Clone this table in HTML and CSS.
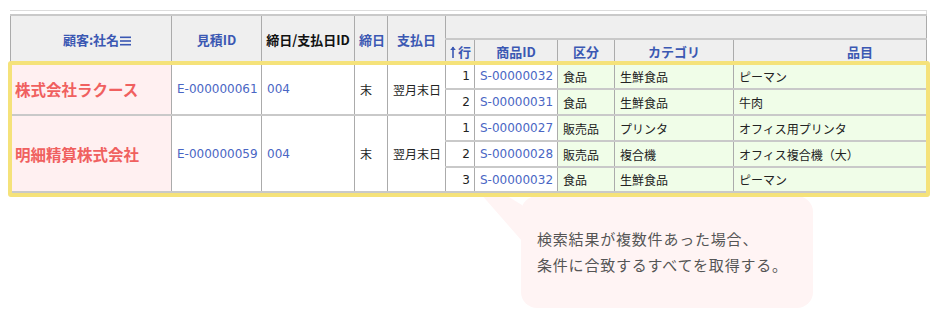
FILE: index.html
```html
<!DOCTYPE html>
<html lang="ja">
<head>
<meta charset="utf-8">
<link rel="stylesheet" href="styles.css">
</head>
<body>
<div class="page">
  <div class="board">
    <div class="grid-wrap">
      <table class="grid">
        <colgroup>
          <col class="c-name"><col class="c-est"><col class="c-pay"><col class="c-cut"><col class="c-day">
          <col class="c-no"><col class="c-pid"><col class="c-kbn"><col class="c-cat"><col class="c-item">
        </colgroup>
        <thead>
          <tr class="h1">
            <th rowspan="2" class="name-h">顧客:社名<svg class="menu-ic" width="11" height="10" viewBox="0 0 11 10"><rect x="0" y="0.5" width="11" height="1.6"/><rect x="0" y="4.2" width="11" height="1.6"/><rect x="0" y="7.9" width="11" height="1.6"/></svg></th>
            <th rowspan="2">見積ID</th>
            <th rowspan="2" class="plain">締日/支払日ID</th>
            <th rowspan="2">締日</th>
            <th rowspan="2">支払日</th>
            <th colspan="5"></th>
          </tr>
          <tr class="h2">
            <th><svg class="arrow-ic" width="6" height="12" viewBox="0 0 6 12"><path d="M3 1 L3 12" stroke="currentColor" stroke-width="1.6"/><path d="M0.2 4 L3 0.5 L5.8 4 Z" fill="currentColor"/></svg>行</th>
            <th>商品ID</th>
            <th>区分</th>
            <th>カテゴリ</th>
            <th class="item-h">品目</th>
          </tr>
        </thead>
        <tbody>
          <tr>
            <td rowspan="2" class="company">株式会社ラクース</td>
            <td rowspan="2" class="link">E-000000061</td>
            <td rowspan="2" class="link">004</td>
            <td rowspan="2">末</td>
            <td rowspan="2">翌月末日</td>
            <td class="num">1</td><td class="link">S-00000032</td><td class="green">食品</td><td class="green">生鮮食品</td><td class="green">ピーマン</td>
          </tr>
          <tr>
            <td class="num">2</td><td class="link">S-00000031</td><td class="green">食品</td><td class="green">生鮮食品</td><td class="green">牛肉</td>
          </tr>
          <tr>
            <td rowspan="3" class="company">明細精算株式会社</td>
            <td rowspan="3" class="link">E-000000059</td>
            <td rowspan="3" class="link">004</td>
            <td rowspan="3">末</td>
            <td rowspan="3">翌月末日</td>
            <td class="num">1</td><td class="link">S-00000027</td><td class="green">販売品</td><td class="green">プリンタ</td><td class="green">オフィス用プリンタ</td>
          </tr>
          <tr>
            <td class="num">2</td><td class="link">S-00000028</td><td class="green">販売品</td><td class="green">複合機</td><td class="green">オフィス複合機（大）</td>
          </tr>
          <tr class="last">
            <td class="num">3</td><td class="link">S-00000032</td><td class="green">食品</td><td class="green">生鮮食品</td><td class="green">ピーマン</td>
          </tr>
        </tbody>
      </table>
    </div>
    <div class="highlight"></div>
  </div>
  <div class="note">
    <svg class="note-tail" width="42" height="50" viewBox="0 0 42 50"><polygon points="0,0 22,0 42,12 42,48" /></svg>
    <p>検索結果が複数件あった場合、<br>条件に合致するすべてを取得する。</p>
  </div>
</div>
</body>
</html>
```
FILE: styles.css
```css
* { box-sizing: border-box; }
html, body { margin: 0; padding: 0; background: #fff; }
body {
  font-family: "DejaVu Sans", "Noto Sans CJK JP", sans-serif;
  font-size: 12px;
  color: #222;
}
.page {
  padding: 10px 0 0 10px;
  width: 937px;
  height: 316px;
  overflow: hidden;
}
.board {
  position: relative;
  width: 917px;
}
.grid-wrap {
  border-top: 1px solid #dcdcdc;
  border-right: 1px solid #dcdcdc;
  padding-top: 3px;
}
.grid {
  border-collapse: collapse;
  table-layout: fixed;
  width: 916px;
}
.c-name { width: 161px; }
.c-est { width: 90px; }
.c-pay { width: 93px; }
.c-cut { width: 33px; }
.c-day { width: 58px; }
.c-no { width: 29px; }
.c-pid { width: 83px; }
.c-kbn { width: 57px; }
.c-cat { width: 119px; }
.c-item { width: 193px; }

.grid th, .grid td {
  border-left: 1px solid #ababab;
  border-right: 1px solid #ababab;
  border-top: 2px solid #c9c9c9;
  border-bottom: 2px solid #c9c9c9;
  padding: 0 4px;
  white-space: nowrap;
  overflow: hidden;
}
.grid th {
  background: #efefef;
  color: #3b58b3;
  font-family: "Noto Sans CJK JP", "DejaVu Sans", sans-serif;
  font-weight: bold;
  font-size: 13px;
  text-align: center;
  vertical-align: middle;
}
.grid th.plain { color: #111; padding: 0 2px; }
.grid th.name-h { padding-left: 16px; }
.grid th.item-h { padding-left: 64px; }
.grid tr.h1 th { height: 24px; }
.grid tr.h2 th { height: 24px; }
.menu-ic { fill: #3b58b3; margin-left: 1px; vertical-align: -1px; }
.arrow-ic { color: #3b58b3; margin-right: 2px; vertical-align: -1px; }

.grid td {
  height: 26px;
  background: #fff;
  font-size: 12px;
  vertical-align: middle;
  padding: 0 5px;
}
.grid tr.last td { height: 25px; }
.grid td.company {
  background: #fff0f1;
  color: #f0605f;
  font-family: "Noto Sans CJK JP", sans-serif;
  font-weight: bold;
  font-size: 15.5px;
  padding-left: 4px;
}
.grid td.link { color: #4a66c4; }
.grid td.num { text-align: right; padding-right: 4px; }
.grid td.green { background: #f0fde8; }

.highlight {
  position: absolute;
  left: -2px;
  top: 51px;
  width: 922px;
  height: 136px;
  border: 4px solid #f5e27a;
  border-radius: 3px;
  pointer-events: none;
  z-index: 2;
}

.note {
  position: relative;
  margin: 3px 0 0 511px;
  width: 292px;
  height: 112px;
  background: #fff4f4;
  border-radius: 16px;
  padding: 30px 0 0 16px;
  z-index: 1;
}
.note-tail {
  position: absolute;
  left: -41px;
  top: -3px;
  fill: #fff4f4;
}
.note p {
  margin: 0;
  font-family: "Noto Sans CJK JP", sans-serif;
  font-size: 15px;
  letter-spacing: 0.8px;
  line-height: 26px;
  color: #555;
}
```
